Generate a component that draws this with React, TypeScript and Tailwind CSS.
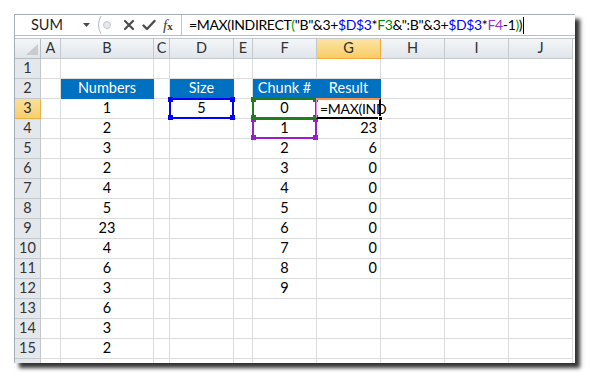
import type { ReactNode } from "react";

const COLS = "grid grid-cols-[26px_20px_93px_16px_64px_19px_64px_64px_64px_64px_64px]";
const LETTERS = ["A", "B", "C", "D", "E", "F", "G", "H", "I", "J"];

const numbers = ["1", "2", "3", "2", "4", "5", "23", "4", "6", "3", "6", "3", "2"];
const chunks = ["0", "1", "2", "3", "4", "5", "6", "7", "8", "9"];
const results = ["", "23", "6", "0", "0", "0", "0", "0", "0"];

function Corners({ color }: { color: string }) {
  return (
    <>
      <span className={`absolute -left-[3px] -top-[3px] w-[5px] h-[5px] ${color}`} />
      <span className={`absolute -right-[3px] -top-[3px] w-[5px] h-[5px] ${color}`} />
      <span className={`absolute -left-[3px] -bottom-[3px] w-[5px] h-[5px] ${color}`} />
      <span className={`absolute -right-[3px] -bottom-[3px] w-[5px] h-[5px] ${color}`} />
    </>
  );
}

function Cell({
  children,
  align = "justify-center",
  head = false,
  extra = "",
}: {
  children?: ReactNode;
  align?: string;
  head?: boolean;
  extra?: string;
}) {
  return (
    <div
      className={`relative flex items-center px-[3px] whitespace-nowrap border-r border-b ${align} ${
        head ? "bg-[#0070c0] border-[#0070c0] text-white" : "border-[#dadcdd] text-black"
      } ${extra}`}
    >
      {children}
    </div>
  );
}

function FormulaBar() {
  return (
    <div className="h-[21px] flex items-stretch border-b border-[#b9bec5] bg-white shrink-0">
      <div className="w-[82px] flex items-center">
        <span className="w-[64px] text-center text-[#1f1f1f]">SUM</span>
        <svg width="8" height="5" viewBox="0 0 8 5" className="ml-[4px] mt-[1px]">
          <path d="M0 0 L7 0 L3.5 4 Z" fill="#4a4a4a" />
        </svg>
      </div>
      <svg width="16" height="20" viewBox="0 0 16 20">
        <path d="M4 1 Q-1 10 4 19" fill="none" stroke="#b4b8bd" strokeWidth="1" />
        <circle cx="10" cy="10" r="3.5" fill="#e6e8eb" stroke="#c3c7cc" strokeWidth="1" />
      </svg>
      <div className="w-[68px] flex items-center pl-[10px] gap-[7px]">
        <svg width="12" height="12" viewBox="0 0 12 12">
          <path d="M2 2 L10 10 M10 2 L2 10" stroke="#4d4d4d" strokeWidth="2.2" strokeLinecap="round" />
        </svg>
        <svg width="14" height="12" viewBox="0 0 14 12">
          <path d="M1.5 6.5 L5 10 L12.5 2" fill="none" stroke="#4d4d4d" strokeWidth="2.4" strokeLinecap="round" strokeLinejoin="round" />
        </svg>
        <span className="italic text-[#3d3d3d] font-['Liberation_Serif',serif] text-[15px] leading-none">
          f<span className="text-[11px] not-italic font-bold">x</span>
        </span>
      </div>
      <div className="w-px bg-[#c3c7cc]" />
      <div className="flex-1 flex items-center pl-[7px] whitespace-nowrap text-[14px] tracking-[-0.35px]">
        <span>=MAX(INDIRECT</span>
        <span className="text-[#00a000]">(</span>
        <span>"B"&amp;3+</span>
        <span className="text-[#0000ff]">$D$3</span>
        <span>*</span>
        <span className="text-[#008000]">F3</span>
        <span>&amp;":B"&amp;3+</span>
        <span className="text-[#0000ff]">$D$3</span>
        <span>*</span>
        <span className="text-[#9933cc]">F4</span>
        <span>-1</span>
        <span className="text-[#00a000]">)</span>
        <span>)</span>
        <span className="ml-[1px] w-px h-[17px] bg-black" />
      </div>
    </div>
  );
}

function HeaderRow() {
  return (
    <div className={`${COLS} h-[20px] shrink-0`}>
      <div className="relative border-r border-b border-[#b8bdc3] bg-gradient-to-b from-[#f4f6f8] to-[#e1e5ea]">
        <svg width="12" height="11" viewBox="0 0 12 11" className="absolute right-[2px] bottom-[3px]">
          <path d="M12 0 L12 11 L0 11 Z" fill="#c8ccd1" />
        </svg>
      </div>
      {LETTERS.map((l) => (
        <div
          key={l}
          className={`flex items-center justify-center border-r border-b ${
            l === "G"
              ? "bg-gradient-to-b from-[#fce4a4] to-[#f7cc63] border-[#f2a93b] text-[#2e2e2e]"
              : "bg-gradient-to-b from-[#f4f6f8] to-[#e1e5ea] border-[#c3c8cd] text-[#333]"
          }`}
        >
          {l}
        </div>
      ))}
    </div>
  );
}

function RowNum({ n }: { n: number }) {
  return (
    <div
      className={`flex items-center justify-center border-r border-b ${
        n === 3
          ? "bg-gradient-to-b from-[#fbe09a] to-[#f7cf6b] border-[#eab14a] text-[#2e2e2e]"
          : "bg-[#e4e7ec] border-[#c3c8cd] text-[#333]"
      }`}
    >
      {n}
    </div>
  );
}

function DataRow({ n }: { n: number }) {
  const b = n === 2 ? "Numbers" : n >= 3 ? numbers[n - 3] : "";
  const f = n === 2 ? "Chunk #" : n >= 3 && n <= 12 ? chunks[n - 3] : "";
  const g = n >= 4 && n <= 11 ? results[n - 3] : "";

  return (
    <div className={`${COLS} h-[20px] shrink-0`}>
      <RowNum n={n} />
      <Cell />
      <Cell head={n === 2}>{b}</Cell>
      <Cell />
      <Cell head={n === 2}>
        {n === 2 ? "Size" : n === 3 ? "5" : ""}
        {n === 3 && (
          <span className="absolute z-10 -left-px -top-px -right-px -bottom-px border-2 border-[#0000ff]">
            <Corners color="bg-[#0000ff]" />
          </span>
        )}
      </Cell>
      <Cell />
      <Cell head={n === 2}>
        {f}
        {n === 3 && (
          <span className="absolute z-20 -left-px -top-px -right-px -bottom-px border-2 border-[#1f7f1f]">
            <Corners color="bg-[#1f7f1f]" />
          </span>
        )}
        {n === 4 && (
          <span className="absolute z-10 -left-px -top-px -right-px -bottom-px border-2 border-[#9b1fc7]">
            <Corners color="bg-[#9b1fc7]" />
          </span>
        )}
      </Cell>
      {n === 2 ? (
        <Cell head>Result</Cell>
      ) : n === 3 ? (
        <Cell align="justify-start" extra="overflow-visible">
          <span className="tracking-[-0.3px] text-[14px]">=MAX(IND</span>
          <span className="absolute z-30 -left-px -top-px -right-px -bottom-px border-t-2 border-t-[#f7964a] border-l border-l-[#ee82ee] border-r-2 border-r-black border-b-2 border-b-black" />
          <span className="absolute z-30 -right-[3px] -bottom-[3px] w-[5px] h-[5px] bg-black border border-white" />
        </Cell>
      ) : (
        <Cell align="justify-end">{g}</Cell>
      )}
      <Cell />
      <Cell />
      <Cell />
    </div>
  );
}

function PartialRow() {
  return (
    <div className={`${COLS} h-[4px] shrink-0`}>
      <div className="border-r border-[#c3c8cd] bg-[#e4e7ec]" />
      {LETTERS.map((l) => (
        <div key={l} className="border-r border-[#dadcdd]" />
      ))}
    </div>
  );
}

export default function App() {
  const rows = Array.from({ length: 15 }, (_, i) => i + 1);
  return (
    <div className="w-[590px] h-[379px] bg-white pl-[14px] pt-[14px] font-['Lato','Open_Sans',sans-serif] text-[14.5px] leading-none">
      <div className="w-[561px] h-[349px] bg-white border-t border-l border-[#a9aeb4] shadow-[5px_5px_4px_rgba(0,0,0,0.8)] overflow-hidden flex flex-col">
        <FormulaBar />
        <div className="h-[3px] shrink-0 bg-white border-b border-[#c3c8cd]" />
        <HeaderRow />
        {rows.map((n) => (
          <DataRow key={n} n={n} />
        ))}
        <PartialRow />
      </div>
    </div>
  );
}
